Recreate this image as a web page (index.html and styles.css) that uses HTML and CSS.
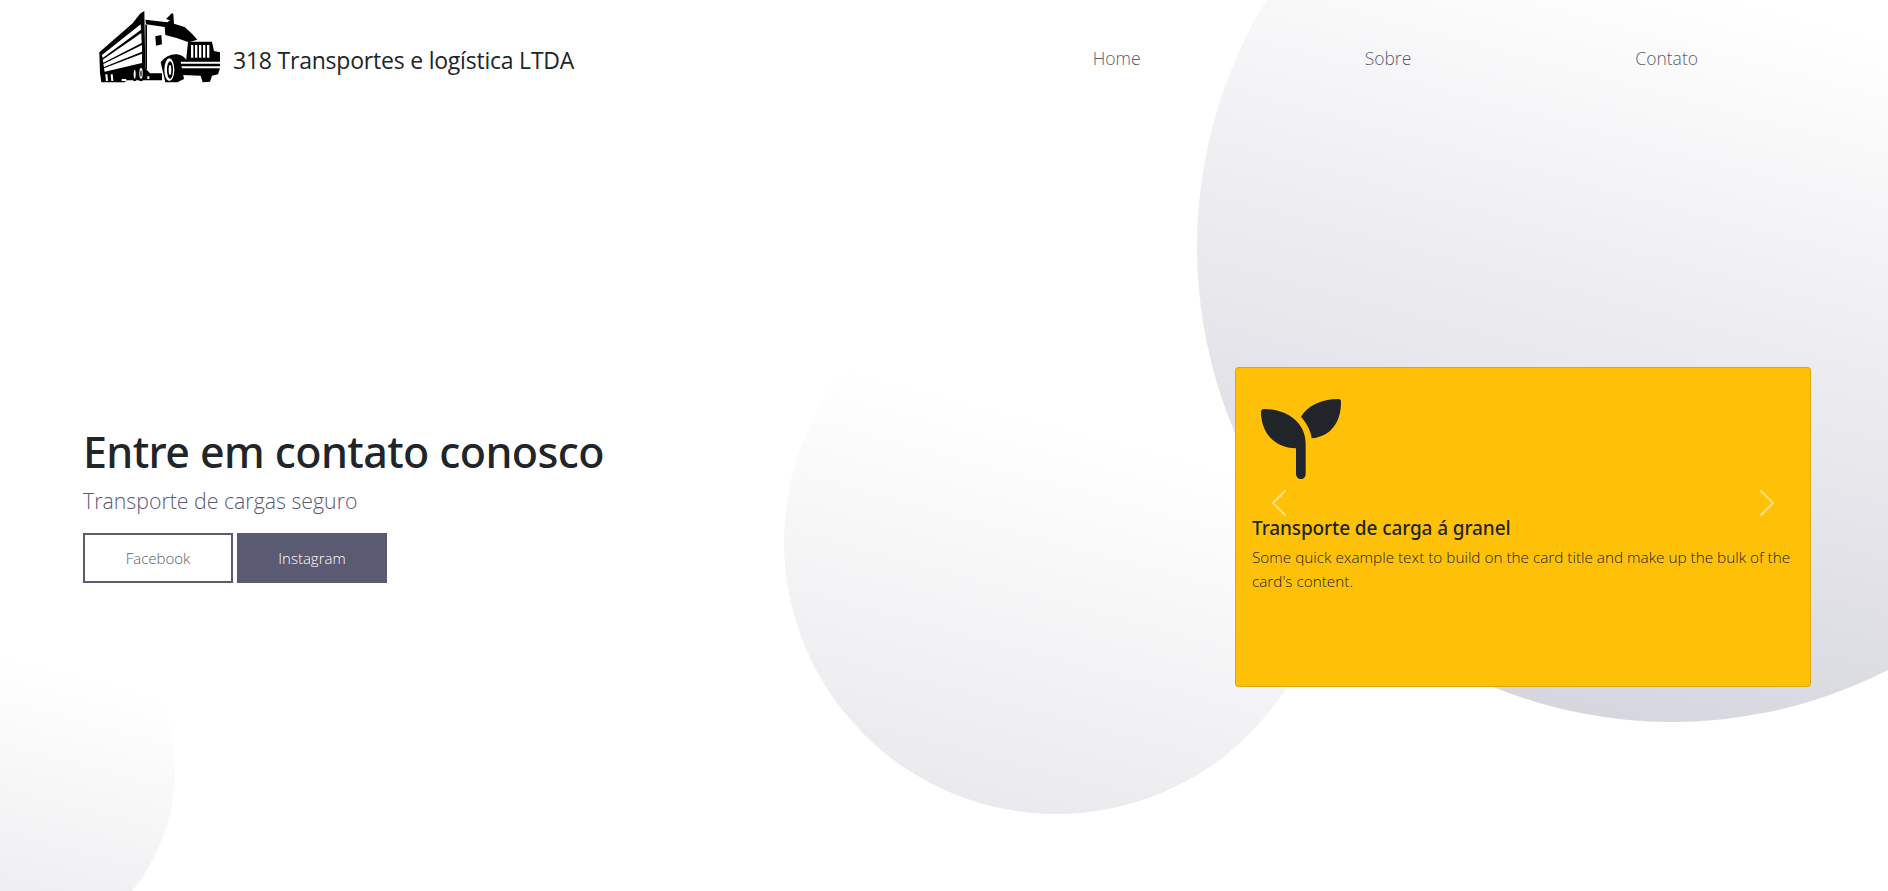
FILE: index.html
```html
<!DOCTYPE html>
<html lang="pt-BR">
    <head>
        <meta charset="utf-8" />
        <title>318 Transportes e logística LTDA</title>
        <link rel="stylesheet" href="styles.css">
    </head>
    <body>
        <div class="backdrop">
            <div class="circle circle-mid"></div>
            <div class="circle circle-big"></div>
            <div class="circle circle-small"></div>
        </div>

        <header class="topbar">
            <a class="brand" href="#">
                <svg class="brand-logo" viewBox="0 0 420 255">
                    <!-- trailer -->
                    <path d="M28 142 L128 55 L150 26 L163 18 L166 190 L150 200 L30 208 Z" fill="#000"/>
                    <path d="M36 150 L152 58 L153 74 L38 159 Z" fill="#fff"/>
                    <path d="M38 164 L154 84 L155 114 L40 173 Z" fill="#fff"/>
                    <path d="M40 177 L156 120 L156 140 L42 186 Z" fill="#fff"/>
                    <path d="M42 190 L156 146 L156 174 L44 200 Z" fill="#fff"/>
                    <path d="M70 92 L100 68 L102 71 L72 95 Z" fill="#fff"/>
                    <!-- chassis -->
                    <path d="M30 204 L166 190 L216 205 L216 226 L110 226 L104 232 L34 232 Z" fill="#000"/>
                    <path d="M46 208 h6 l2 20 h-6 Z M62 208 h6 l2 20 h-6 Z" fill="#fff"/>
                    <path d="M95 222 h14 v6 h-14 Z M172 214 h6 v8 h-6 Z" fill="#fff"/>
                    <!-- rear wheels -->
                    <ellipse cx="153" cy="205" rx="12" ry="24" fill="#000"/>
                    <ellipse cx="153" cy="205" rx="5" ry="16" fill="#fff"/>
                    <ellipse cx="153" cy="206" rx="2" ry="10" fill="#000"/>
                    <ellipse cx="134" cy="208" rx="9" ry="21" fill="#000"/>
                    <ellipse cx="134" cy="208" rx="3" ry="13" fill="#fff"/>
                    <!-- cab -->
                    <path d="M166 58 L222 68 L300 100 L296 150 L262 165 L250 205 L180 205 L166 190 Z" fill="#fff"/>
                    <path d="M166 44 L232 52 L240 46 L228 42 L246 24 L250 28 L252 56 L284 66 L306 86 L322 104 L296 112 L262 100 L226 90 L224 66 L168 58 Z" fill="#000"/>
                    <path d="M196 94 L214 90 L216 118 L198 122 Z" fill="#000"/>
                    <path d="M166 58 L171 60 L171 192 L166 192 Z" fill="#000"/>
                    <!-- grill and bumper -->
                    <path d="M294 110 L366 110 L372 138 L390 142 L390 170 L288 170 Z" fill="#000"/>
                    <path d="M303 120 h7 v38 h-7 Z M315 120 h7 v38 h-7 Z M327 120 h7 v38 h-7 Z M339 120 h7 v38 h-7 Z M351 120 h7 v38 h-7 Z" fill="#fff"/>
                    <path d="M270 176 H390 V184 H272 Z" fill="#000"/>
                    <path d="M276 190 H390 L384 208 L366 212 L360 230 L338 232 L332 212 L276 210 Z" fill="#000"/>
                    <!-- front wheel -->
                    <path d="M212 172 Q232 146 262 148 Q284 152 292 170 L272 170 L282 222 L262 232 L226 232 Z" fill="#000"/>
                    <ellipse cx="238" cy="194" rx="15" ry="34" fill="#fff"/>
                    <ellipse cx="240" cy="195" rx="9" ry="26" fill="#000"/>
                    <ellipse cx="240" cy="195" rx="4" ry="15" fill="#fff"/>
                </svg>
                <span class="brand-name">318 Transportes e logística LTDA</span>
            </a>
            <ul class="menu">
                <li><a href="#">Home</a></li>
                <li><a href="#">Sobre</a></li>
                <li><a href="#">Contato</a></li>
            </ul>
        </header>

        <main class="hero">
            <section class="intro">
                <h1>Entre em contato conosco</h1>
                <p class="subtitle">Transporte de cargas seguro</p>
                <div class="buttons">
                    <a class="btn btn-outline" href="#">Facebook</a>
                    <a class="btn btn-solid" href="#">Instagram</a>
                </div>
            </section>

            <section class="card">
                <div class="slide">
                    <svg class="slide-icon" viewBox="0 0 240 240">
                        <path d="M0 38 Q0 30 10 30 C72 30 134 66 134 134 V226 a14.5 14.5 0 0 1 -29 0 V148 C40 148 0 100 0 38 Z" fill="#212529"/>
                        <path d="M120 53 C140 20 180 0 232 0 Q240 0 240 8 C240 70 210 112 152 118 C150 95 135 70 120 53 Z" fill="#212529"/>
                    </svg>
                    <h5>Transporte de carga á granel</h5>
                    <p>Some quick example text to build on the card title and make up the bulk of the card's content.</p>
                    <a class="arrow arrow-prev" href="#">
                        <svg viewBox="0 0 16 16"><path d="M11.354 1.646a.5.5 0 0 1 0 .708L5.707 8l5.647 5.646a.5.5 0 0 1-.708.708l-6-6a.5.5 0 0 1 0-.708l6-6a.5.5 0 0 1 .708 0z" fill="#fff"/></svg>
                    </a>
                    <a class="arrow arrow-next" href="#">
                        <svg viewBox="0 0 16 16"><path d="M4.646 1.646a.5.5 0 0 1 .708 0l6 6a.5.5 0 0 1 0 .708l-6 6a.5.5 0 0 1-.708-.708L10.293 8 4.646 2.354a.5.5 0 0 1 0-.708z" fill="#fff"/></svg>
                    </a>
                </div>
            </section>
        </main>
    </body>
</html>
```

FILE: styles.css
```css
html, body {
    margin: 0;
    padding: 0;
}
body {
    position: relative;
    height: 891px;
    overflow: hidden;
    background: #fff;
    color: #212529;
    font-family: "Open Sans", "Noto Sans", sans-serif;
    font-size: 16px;
    line-height: 24px;
}
a {
    color: inherit;
    text-decoration: none;
}

/* background circles */
.backdrop {
    position: absolute;
    top: 0;
    left: 0;
    width: 100%;
    height: 891px;
    overflow: hidden;
}
.circle {
    position: absolute;
    border-radius: 50%;
}
.circle-big {
    left: 1197px;
    top: -228px;
    width: 950px;
    height: 950px;
    background: linear-gradient(195deg, #fff 28%, #d0d0da 100%);
}
.circle-mid {
    left: 784px;
    top: 269px;
    width: 545px;
    height: 545px;
    background: linear-gradient(195deg, #fff 33%, #e7e7eb 100%);
}
.circle-small {
    left: -209px;
    top: 578px;
    width: 384px;
    height: 384px;
    background: linear-gradient(195deg, #fff 25%, #e6e6ea 100%);
}

/* top */
.topbar {
    position: relative;
    display: flex;
    justify-content: space-between;
    height: 97px;
    padding: 5px 190px 0 90px;
    box-sizing: border-box;
}
.brand {
    display: flex;
    align-items: center;
    height: 85px;
    gap: 3px;
}
.brand-logo {
    width: 140px;
    height: 85px;
}
.brand-name {
    font-size: 23px;
    letter-spacing: -0.22px;
    padding-top: 24px;
}
.menu {
    display: flex;
    gap: 224px;
    list-style: none;
    margin: 41px 0 0;
    padding: 0;
    color: #5a5a72;
    font-size: 17.5px;
    font-weight: 300;
    height: 24px;
}

/* hero */
.hero {
    position: relative;
    display: flex;
    justify-content: space-between;
    padding: 270px 77px 0 83px;
}
.intro {
    padding-top: 58px;
}
.intro h1 {
    margin: 0;
    font-family: "Noto Sans", sans-serif;
    font-size: 43px;
    line-height: 53px;
    font-weight: 500;
    letter-spacing: -0.6px;
}
.subtitle {
    margin: 8px 0 17px;
    font-size: 21.3px;
    line-height: 30px;
    font-weight: 300;
    color: #5a5a72;
}
.buttons {
    display: flex;
    gap: 4px;
}
.btn {
    display: flex;
    align-items: center;
    justify-content: center;
    width: 150px;
    height: 50px;
    box-sizing: border-box;
    font-size: 15px;
    font-weight: 300;
}
.btn-outline {
    border: 2px solid #5a5a72;
    color: #5a5a72;
}
.btn-solid {
    background: #5a5a72;
    color: #fff;
}

/* card with the slide */
.card {
    width: 576px;
    height: 320px;
    box-sizing: border-box;
    border: 1px solid rgba(0, 0, 0, .125);
    border-radius: 4px;
    background: #ffc107;
}
.slide {
    position: relative;
    height: 270px;
    padding: 31px 16px 0;
    box-sizing: border-box;
}
.slide-icon {
    display: block;
    width: 80px;
    height: 80px;
    margin-left: 9px;
}
.slide h5 {
    margin: 37px 0 5px;
    font-family: "Noto Sans", sans-serif;
    font-size: 19px;
    line-height: 24px;
    font-weight: 500;
    letter-spacing: -0.1px;
}
.slide p {
    margin: 0;
    font-size: 15.3px;
    font-weight: 300;
}
.arrow {
    position: absolute;
    top: 0;
    bottom: 0;
    width: 15%;
    display: flex;
    align-items: center;
    justify-content: center;
    opacity: .5;
}
.arrow svg {
    width: 32px;
    height: 32px;
}
.arrow-prev {
    left: 0;
}
.arrow-next {
    right: 0;
}
```
